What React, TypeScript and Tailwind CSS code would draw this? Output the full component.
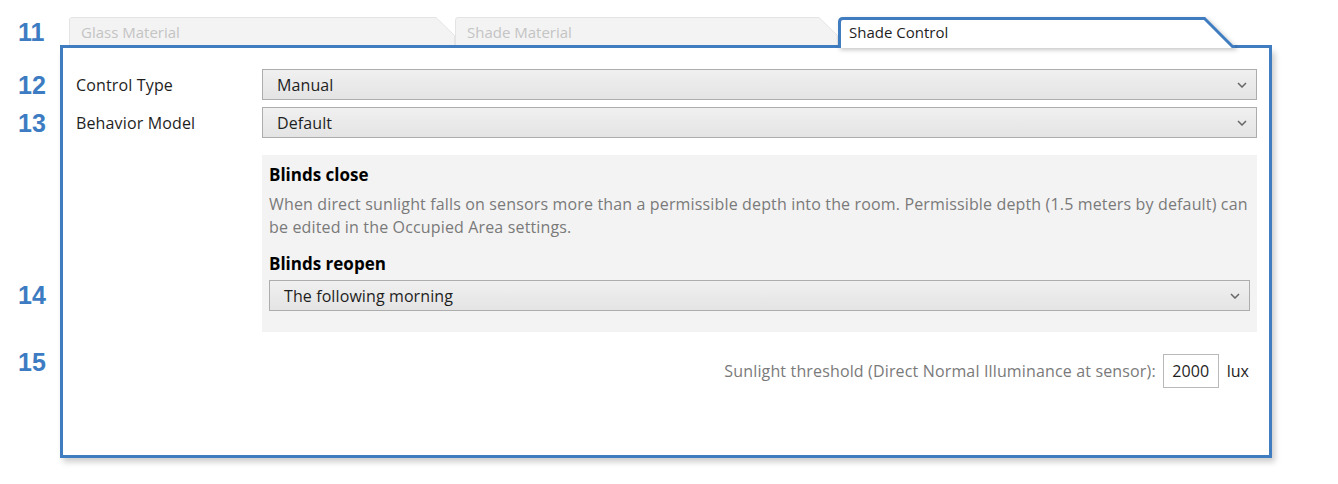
import React from 'react'

const BLUE = '#3f7cc0'

function Chevron() {
  return (
    <svg width="10" height="6" viewBox="0 0 10 6" className="shrink-0">
      <polyline points="1,1 5,5 9,1" fill="none" stroke="#666" strokeWidth="1.5" />
    </svg>
  )
}

function Dropdown({ value, className = '' }: { value: string; className?: string }) {
  return (
    <div
      className={`flex items-center h-[31px] pl-[14px] pr-[9px] border border-[#adadad] bg-gradient-to-b from-[#f0f0f0] to-[#e4e4e4] text-[16px] tracking-[0.1px] text-[#1e1e1e] ${className}`}
    >
      <span className="flex-1">{value}</span>
      <Chevron />
    </div>
  )
}

function InactiveTab({ label, width }: { label: string; width: number }) {
  const w = width
  return (
    <div className="relative h-[28px] shrink-0" style={{ width: w }}>
      <svg className="absolute inset-0" width={w} height={28} viewBox={`0 0 ${w} 28`}>
        <path
          d={`M0.5 28 V3 Q0.5 0.5 3 0.5 H${w - 19} L${w - 0.5} 18.5 V28`}
          fill="#f3f3f3"
          stroke="#e4e4e4"
        />
      </svg>
      <span className="relative block pl-[12px] pt-[5px] text-[15px] leading-[20px] text-[#c4c4c4]">{label}</span>
    </div>
  )
}

function ActiveTab({ label }: { label: string }) {
  return (
    <div className="relative w-[395px] h-[31px] shrink-0">
      <svg
        className="absolute inset-0 overflow-visible drop-shadow-[2px_2px_2px_rgba(0,0,0,0.22)]"
        width={395}
        height={31}
        viewBox="0 0 395 31"
      >
        <path d="M0 31 V5 Q0 0 5 0 H367.5 L396 28.5 V31 Z" fill="#fff" />
        <path d="M1.5 31 V5 Q1.5 1.5 5 1.5 H366.5 L394.5 29.5 H397" fill="none" stroke={BLUE} strokeWidth="3" />
      </svg>
      <span className="relative block pl-[11px] pt-[5px] text-[15px] leading-[20px] text-[#1e1e1e]">{label}</span>
    </div>
  )
}

function Num({ n, className }: { n: string; className: string }) {
  return (
    <div className={`h-[31px] flex items-center pl-[18px] font-['Liberation_Sans',Arial,sans-serif] font-bold text-[25px] text-[#3d7cc2] ${className}`}>
      {n}
    </div>
  )
}

export default function App() {
  return (
    <div className="w-[1338px] h-[484px] overflow-hidden bg-white font-['Open_Sans','Noto_Sans',sans-serif]">
      <div className="flex pt-[17px]">
        {/* Callout numbers */}
        <div className="w-[60px] shrink-0 flex flex-col">
          <Num n="11" className="" />
          <Num n="12" className="mt-[22px]" />
          <Num n="13" className="mt-[7px]" />
          <Num n="14" className="mt-[141px]" />
          <Num n="15" className="mt-[36px]" />
        </div>

        {/* Tab panel */}
        <div className="w-[1212px] shrink-0 flex flex-col">
          <div className="flex h-[31px] relative z-10">
            <div className="w-[778px] h-[31px] flex items-end pl-[9px] border-b-[3px] border-[#3f7cc0]">
              <InactiveTab label="Glass Material" width={386} />
              <InactiveTab label="Shade Material" width={383} />
            </div>
            <ActiveTab label="Shade Control" />
            <div className="w-[39px] h-[31px] border-b-[3px] border-[#3f7cc0]" />
          </div>

          <div className="h-[410px] border-[3px] border-t-0 border-[#3f7cc0] bg-white shadow-[3px_4px_6px_rgba(0,0,0,0.2)] pl-[13px] pr-[12px] pt-[21px] text-[16px] tracking-[0.15px]">
            <div className="flex items-center">
              <span className="w-[186px] shrink-0 text-[#1e1e1e]">Control Type</span>
              <Dropdown value="Manual" className="flex-1" />
            </div>
            <div className="flex items-center mt-[7px]">
              <span className="w-[186px] shrink-0 text-[#1e1e1e]">Behavior Model</span>
              <Dropdown value="Default" className="flex-1" />
            </div>

            <div className="ml-[186px] mt-[17px] bg-[#f3f3f3] pt-[8px] pb-[21px] px-[7px]">
              <div className="text-[17px] leading-[24px] font-bold tracking-normal text-black">Blinds close</div>
              <p className="mt-[6px] leading-[23px] text-[#7a7a7a]">
                When direct sunlight falls on sensors more than a permissible depth into the room. Permissible depth (1.5 meters by default) can be edited in the Occupied Area settings.
              </p>
              <div className="mt-[13px] text-[17px] leading-[24px] font-bold tracking-normal text-black">Blinds reopen</div>
              <Dropdown value="The following morning" className="mt-[4px]" />
            </div>

            <div className="flex items-center justify-end mt-[22px] pr-[8px]">
              <span className="text-[#7a7a7a]">Sunlight threshold (Direct Normal Illuminance at sensor):</span>
              <div className="ml-[7px] w-[56px] h-[34px] border border-[#b9b9b9] flex items-center justify-center text-[#1e1e1e]">
                2000
              </div>
              <span className="ml-[8px] tracking-normal text-[#1e1e1e]">lux</span>
            </div>
          </div>
        </div>
      </div>
    </div>
  )
}
